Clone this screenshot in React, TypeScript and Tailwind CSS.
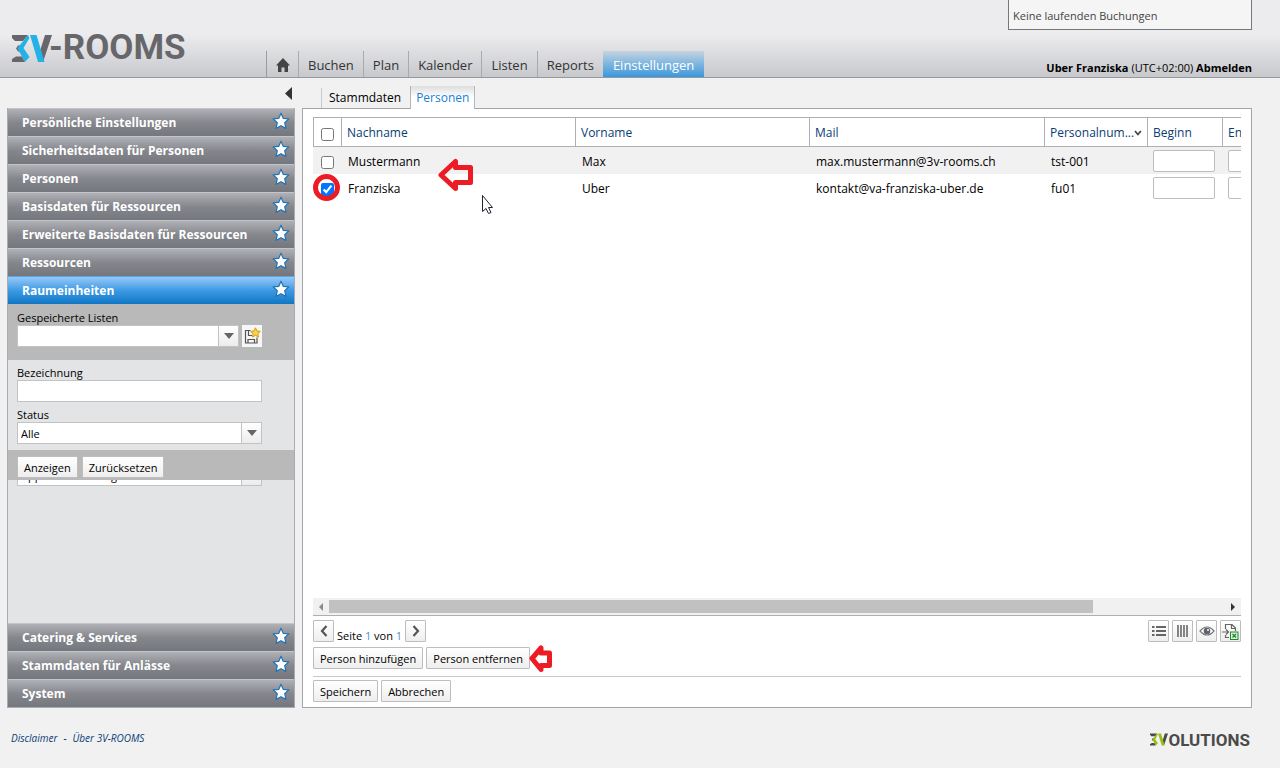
import type { ReactNode } from 'react';

const nav = ['Buchen', 'Plan', 'Kalender', 'Listen', 'Reports', 'Einstellungen'];
const topSections = [
  'Persönliche Einstellungen',
  'Sicherheitsdaten für Personen',
  'Personen',
  'Basisdaten für Ressourcen',
  'Erweiterte Basisdaten für Ressourcen',
  'Ressourcen',
  'Raumeinheiten',
];
const bottomSections = ['Catering & Services', 'Stammdaten für Anlässe', 'System'];
const people = [
  { last: 'Mustermann', first: 'Max', mail: 'max.mustermann@3v-rooms.ch', id: 'tst-001', checked: false },
  { last: 'Franziska', first: 'Uber', mail: 'kontakt@va-franziska-uber.de', id: 'fu01', checked: true },
];

function Mark({ dark, light, className }: { dark: string; light: string; className: string }) {
  return (
    <svg viewBox="0 0 40 27" className={className} aria-hidden="true">
      <path d="M0 0H16L11 6H3L0 3ZM0 27H13L10 21.500H4L0 24ZM6 10.500H9V16.500H6L4 13.500Z" fill={dark} />
      <path d="M33 0H40L31 27L28 16Z" fill={dark} />
      <path d="M16 0L5.300 13.300L13 27L17.500 22L11.500 13L17.500 3Z" fill={light} />
      <path d="M18 0H24.500L32.500 27H26Z" fill={light} />
    </svg>
  );
}

function Star() {
  return (
    <svg viewBox="0 0 18 18" className="mb-[3px] h-[18px] w-[18px]" aria-hidden="true">
      <path
        d="M9 1.200L11.200 6.300L16.900 6.800L12.700 10.700L13.900 16.400L9 13.700L4.100 16.400L5.300 10.700L1.100 6.800L6.800 6.300Z"
        fill="#fff"
        stroke="#2272b4"
        strokeWidth="1.200"
        strokeLinejoin="round"
      />
    </svg>
  );
}

function Section({ title, active }: { title: string; active?: boolean }) {
  return (
    <button
      className={
        'flex h-7 w-full items-center justify-between border-t pr-1 pl-[14px] text-left text-[12px] font-bold text-white ' +
        (active
          ? 'border-[#5aa7e6] bg-linear-to-b from-[#94c8f7] via-[#3a9ae4] to-[#0e76c4]'
          : 'border-[#c4c5c9] bg-linear-to-b from-[#b0b1b6] via-[#85878d] to-[#74777d]')
      }
    >
      <span className="pt-px">{title}</span>
      <Star />
    </button>
  );
}

function Caret() {
  return (
    <svg viewBox="0 0 10 6" className="h-[6px] w-[10px]" aria-hidden="true">
      <path d="M0 0H10L5 6Z" fill="#666" />
    </svg>
  );
}

function Combo({ id, label, value, className }: { id: string; label?: string; value: string; className: string }) {
  return (
    <div className={'flex h-[22px] border border-[#c3c3c3] bg-white ' + className}>
      <select id={id} aria-label={label} className="min-w-0 flex-1 appearance-none bg-white px-[3px] pt-px text-[11px] leading-5">
        <option>{value}</option>
      </select>
      <span className="pointer-events-none flex w-5 items-center justify-center border-l border-[#c3c3c3] bg-linear-to-b from-white to-[#ececec]">
        <Caret />
      </span>
    </div>
  );
}

function Btn({ children }: { children: ReactNode }) {
  return (
    <button className="h-[22px] rounded-[1px] border border-[#bdbdbf] bg-linear-to-b from-white to-[#eeeeee] px-[6px] pt-[2px] text-[11px] leading-4 whitespace-nowrap text-black">
      {children}
    </button>
  );
}

function IconBtn({ label, children }: { label: string; children: ReactNode }) {
  return (
    <button
      aria-label={label}
      className="flex h-[22px] w-[21px] items-center justify-center rounded-[1px] border border-[#bdbdbf] bg-linear-to-b from-white to-[#eeeeee]"
    >
      {children}
    </button>
  );
}

export default function App() {
  const th = 'border-r border-[#aeafb6] px-[5px] pt-[3px] pb-px text-left font-normal text-[#0a3c74] truncate';
  const td = 'px-[6px] pt-[3px] pb-px';
  const dateBox = 'block h-[22px] w-[62px] rounded-[2px] border border-[#bdbdbf] bg-white';
  return (
    <div className="flex min-h-screen flex-col bg-[#f1f1f1] font-['Open_Sans','Noto_Sans',sans-serif] text-[12px] text-black">
      <header className="flex h-[78px] items-end border-b border-[#97989c] bg-linear-to-b from-[#ececee] from-45% to-[#c8c9cd]">
        <div className="flex w-[266px] shrink-0 items-center self-start pt-[27px] pl-3">
          <Mark dark="#67676b" light="#23b2e8" className="h-[27px] w-10" />
          <span className="-ml-[3px] font-['Roboto',sans-serif] text-[35px] leading-[42px] font-bold text-[#67676b]">-ROOMS</span>
        </div>
        <nav className="flex items-end">
          <a href="#home" aria-label="Home" className="flex h-[26px] w-8 items-center justify-center border-l border-[#9a9b9f] pt-[2px]">
            <svg viewBox="0 0 14 14" className="h-[14px] w-[14px]" aria-hidden="true">
              <path d="M7 0L14 7.500H12V14H8.500V9.500H5.500V14H2V7.500H0Z" fill="#444" />
            </svg>
          </a>
          {nav.map((n) => (
            <a
              key={n}
              href={'#' + n}
              className={
                'flex h-[26px] items-center pt-[3px] text-[13px] ' +
                (n === 'Einstellungen'
                  ? 'bg-linear-to-b from-[#c4d3e0] via-[#7db5df] to-[#3797dc] px-[10px] text-white'
                  : 'border-l border-[#a9aaae] px-[9px] text-[#333]')
              }
            >
              {n}
            </a>
          ))}
        </nav>
        <div className="mr-7 ml-auto flex flex-col items-end self-stretch text-[11px]">
          <div className="h-[30px] w-[244px] border border-t-0 border-[#77787a] bg-[#f5f5f5] px-1 pt-2 text-[#444]">
            Keine laufenden Buchungen
          </div>
          <div className="mt-auto pb-px">
            <a href="#user" className="font-bold">Uber Franziska</a> (UTC+02:00){' '}
            <a href="#logout" className="font-bold">Abmelden</a>
          </div>
        </div>
      </header>

      <main className="flex flex-1 gap-[7px] pr-7 pl-[7px]">
        <aside className="flex w-72 shrink-0 flex-col">
          <div className="flex h-[30px] items-center justify-end pr-[3px]">
            <button aria-label="Seitenleiste einklappen">
              <svg viewBox="0 0 7 13" className="h-[13px] w-[7px]" aria-hidden="true">
                <path d="M7 0V13L0 6.500Z" fill="#333" />
              </svg>
            </button>
          </div>
          <div className="flex flex-1 flex-col border border-t-0 border-[#aaabb0] bg-[#e3e4e6]">
            {topSections.map((t) => (
              <Section key={t} title={t} active={t === 'Raumeinheiten'} />
            ))}
            <div className="flex h-14 flex-col bg-[#b9b9b9] px-[9px] pt-[5px] text-[11px]">
              <label htmlFor="lists" className="pt-px leading-[15px]">Gespeicherte Listen</label>
              <div className="flex gap-[3px]">
                <Combo id="lists" value="" className="w-[222px]" />
                <button aria-label="Liste speichern" className="flex h-[22px] w-5 items-center justify-center bg-[#f6f6f6]">
                  <svg viewBox="0 0 18 18" className="h-[18px] w-[18px]" aria-hidden="true">
                    <path d="M7.500 3.500H2.500V16H14V10.500M5.500 3.500V8.500H9M5 16V12.500H11.500V16" fill="none" stroke="#555" strokeWidth="1.200" />
                    <path d="M12.500 0.800L14 4L17.300 4.400L14.800 6.700L15.500 10L12.500 8.300L9.500 10L10.200 6.700L7.700 4.400L11 4Z" fill="#fbd34a" stroke="#d49a12" />
                  </svg>
                </button>
              </div>
            </div>
            <div className="flex h-[90px] flex-col px-[9px] pt-1 text-[11px]">
              <label htmlFor="name" className="pt-px leading-[15px]">Bezeichnung</label>
              <input id="name" className="mb-1 h-[22px] w-[245px] border border-[#c3c3c3] bg-white px-[3px]" />
              <label htmlFor="status" className="pt-px leading-[15px]">Status</label>
              <Combo id="status" value="Alle" className="w-[245px]" />
            </div>
            <div className="flex h-[30px] items-center gap-1 bg-[#b9b9b9] px-[9px] pt-1">
              <Btn>Anzeigen</Btn>
              <Btn>Zurücksetzen</Btn>
            </div>
            <div className="flex h-[6px] items-end overflow-hidden px-[9px]">
              <Combo id="type" label="Typ" value="Appartementanlage" className="w-[245px] shrink-0" />
            </div>
            <div className="flex-1" />
            {bottomSections.map((t) => (
              <Section key={t} title={t} />
            ))}
          </div>
        </aside>

        <section className="flex min-w-0 flex-1 flex-col">
          <div className="flex h-[30px] items-end pl-[19px]">
            <a href="#stammdaten" className="flex h-5 items-center border-l border-[#c9c9cc] px-[7px]">Stammdaten</a>
            <a
              href="#personen"
              className="relative -mb-px ml-[2px] flex h-[23px] items-center border-x border-[#b5b6ba] bg-linear-to-b from-[#dedede] to-white to-50% px-[5px] text-[#1b7fd6]"
            >
              Personen
            </a>
          </div>
          <div className="flex flex-1 flex-col border border-[#a3a4a9] bg-white px-[10px] pt-2 pb-[5px]">
            <div className="relative flex-1 overflow-hidden">
              <table className="w-[1088px] table-fixed border-separate border-spacing-0">
                <colgroup>
                  <col className="w-[29px]" />
                  <col className="w-[234px]" />
                  <col className="w-[234px]" />
                  <col className="w-[235px]" />
                  <col className="w-[103px]" />
                  <col className="w-[75px]" />
                  <col />
                </colgroup>
                <thead>
                  <tr className="h-[30px] *:border-y *:border-[#aeafb6]">
                    <th className="border-x border-[#aeafb6] p-0">
                      <input type="checkbox" aria-label="Alle auswählen" className="mx-auto mt-1 block h-[13px] w-[13px]" />
                    </th>
                    <th className={th}>Nachname</th>
                    <th className={th}>Vorname</th>
                    <th className={th}>Mail</th>
                    <th className={th}>
                      <div className="flex items-center justify-between">
                        <span>Personalnum...</span>
                        <svg viewBox="0 0 8 6" className="h-[6px] w-2" aria-hidden="true">
                          <path d="M1 1L4 4.500L7 1" fill="none" stroke="#444" strokeWidth="1.800" />
                        </svg>
                      </div>
                    </th>
                    <th className={th}>Beginn</th>
                    <th className={th}>Ende</th>
                  </tr>
                </thead>
                <tbody>
                  {people.map((p) => (
                    <tr key={p.id} className={'h-[27px] ' + (p.checked ? 'bg-white' : 'bg-[#f1f1f1]')}>
                      <td className="relative p-0">
                        <input
                          type="checkbox"
                          aria-label={p.last}
                          defaultChecked={p.checked}
                          className="mx-auto mt-1 block h-[13px] w-[13px]"
                        />
                        {p.checked && (
                          <span className="pointer-events-none absolute top-0 left-0 h-[27px] w-[27px] rounded-full border-5 border-[#ed1c24]" />
                        )}
                      </td>
                      <td className={td}>{p.last}</td>
                      <td className={td}>{p.first}</td>
                      <td className={td}>{p.mail}</td>
                      <td className={td}>{p.id}</td>
                      <td className="px-[5px] py-0">
                        <input aria-label={'Beginn ' + p.last} className={dateBox} />
                      </td>
                      <td className="px-[5px] py-0">
                        <input aria-label={'Ende ' + p.last} className={dateBox} />
                      </td>
                    </tr>
                  ))}
                </tbody>
              </table>
              <svg viewBox="438 158 56 58" className="pointer-events-none absolute top-[41px] left-[125px] h-[58px] w-14" aria-hidden="true">
                <path d="M441 175L455.500 161.500V167.500H470.500V182.500H455.500V188.500Z" fill="none" stroke="#ed1c24" strokeWidth="5" strokeLinejoin="round" />
                <path d="M482.500 195.500V211.500L486 208.500L488.500 213.500L491 212.500L488.500 207.500H492.500Z" fill="#fff" stroke="#223" strokeWidth="1" />
              </svg>
            </div>
            <div className="flex h-[17px] items-center bg-[#f1f1f1] shadow-[0_1px_0_#aeafb6]">
              <span className="flex w-4 justify-center">
                <svg viewBox="0 0 4 8" className="h-2 w-1" aria-hidden="true"><path d="M4 0V8L0 4Z" fill="#8a8a8a" /></svg>
              </span>
              <div className="flex flex-1">
                <div className="h-[13px] w-[85.3%] bg-[#c1c1c1]" />
              </div>
              <span className="flex w-4 justify-center">
                <svg viewBox="0 0 4 8" className="h-2 w-1" aria-hidden="true"><path d="M0 0V8L4 4Z" fill="#333" /></svg>
              </span>
            </div>
            <div className="mt-[5px] flex justify-between">
              <div className="flex gap-[3px]">
                <IconBtn label="Vorherige Seite">
                  <svg viewBox="0 0 8 12" className="h-3 w-2" aria-hidden="true"><path d="M6.500 1L2 6L6.500 11" fill="none" stroke="#555" strokeWidth="2.200" /></svg>
                </IconBtn>
                <span className="pt-2 text-[11px] leading-4">
                  Seite <span className="text-[#4a90dc]">1</span> von <span className="text-[#4a90dc]">1</span>
                </span>
                <IconBtn label="Nächste Seite">
                  <svg viewBox="0 0 8 12" className="h-3 w-2" aria-hidden="true"><path d="M1.500 1L6 6L1.500 11" fill="none" stroke="#555" strokeWidth="2.200" /></svg>
                </IconBtn>
              </div>
              <div className="flex gap-[3px]">
                <IconBtn label="Listenansicht">
                  <svg viewBox="0 0 14 12" className="h-3 w-[14px]" aria-hidden="true">
                    <path d="M4 2H14M4 6H14M4 10H14M0 2H2.500M0 6H2.500M0 10H2.500" stroke="#666" strokeWidth="1.800" />
                  </svg>
                </IconBtn>
                <IconBtn label="Spalten">
                  <svg viewBox="0 0 11 12" className="h-3 w-[11px]" aria-hidden="true">
                    <path d="M1 0V12M4 0V12M7 0V12M10 0V12" stroke="#555" strokeWidth="1.400" />
                  </svg>
                </IconBtn>
                <IconBtn label="Anzeigen">
                  <svg viewBox="0 0 16 10" className="h-[10px] w-4" aria-hidden="true">
                    <path d="M1 5Q8 -3 15 5Q8 13 1 5Z" fill="#fff" stroke="#777" strokeWidth="1.200" />
                    <circle cx="8" cy="5" r="3.300" fill="#5d636e" />
                    <circle cx="9" cy="4" r="1" fill="#fff" />
                  </svg>
                </IconBtn>
                <IconBtn label="Nach Excel exportieren">
                  <svg viewBox="0 0 17 17" className="h-[17px] w-[17px] shrink-0" aria-hidden="true">
                    <path d="M3.500 6V1.500H10L13.500 5V8M3.500 12V14.500H7M9.500 1.500V5.500H13.500M0 9H6M4 6.500L6.500 9L4 11.500" fill="none" stroke="#666" strokeWidth="1.200" />
                    <rect x="8.500" y="9" width="7.500" height="7.500" fill="#dff2df" stroke="#1d8a2b" />
                    <path d="M10.500 11L14 14.500M14 11L10.500 14.500" stroke="#1d8a2b" strokeWidth="1.400" />
                  </svg>
                </IconBtn>
              </div>
            </div>
            <div className="mt-[3px] flex items-center gap-[3px]">
              <Btn>Person hinzufügen</Btn>
              <Btn>Person entfernen</Btn>
              <svg viewBox="529 644 24 28" className="-my-1 -ml-1 h-7 w-6" aria-hidden="true">
                <path d="M532 658.500L541 648V653H549.500V665.500H541V669.500Z" fill="#fff" stroke="#ed1c24" strokeWidth="5" strokeLinejoin="round" />
              </svg>
            </div>
            <div className="mt-[7px] flex gap-[3px] border-t border-[#c8c8cb] pt-[3px]">
              <Btn>Speichern</Btn>
              <Btn>Abbrechen</Btn>
            </div>
          </div>
        </section>
      </main>

      <footer className="flex h-[60px] items-center justify-between pr-[30px] pl-[11px]">
        <div className="text-[10px] text-[#0a3c74] italic">
          <a href="#disclaimer">Disclaimer</a>
          <span className="mx-[6px]">-</span>
          <a href="#about">Über 3V-ROOMS</a>
        </div>
        <div className="flex items-center pt-[3px]">
          <Mark dark="#4a4a4a" light="#97c00e" className="h-[13px] w-[18px]" />
          <span className="font-['Roboto',sans-serif] text-[17px] leading-5 font-bold text-[#4a4a4a]">OLUTIONS</span>
        </div>
      </footer>
    </div>
  );
}
